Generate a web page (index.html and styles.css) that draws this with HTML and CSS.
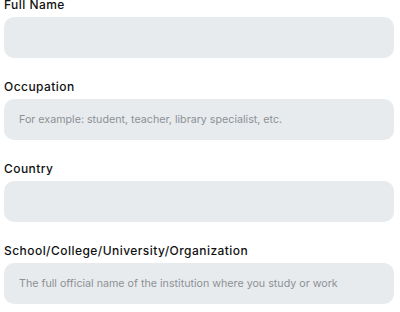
FILE: index.html
```html
<!DOCTYPE html>
<html>
<head>
<meta charset="utf-8">
<link rel="stylesheet" href="styles.css">
</head>
<body>
<form class="form">
  <div class="field">
    <label class="label">Full Name</label>
    <input class="input" type="text">
  </div>
  <div class="field">
    <label class="label">Occupation</label>
    <input class="input" type="text" placeholder="For example: student, teacher, library specialist, etc.">
  </div>
  <div class="field">
    <label class="label">Country</label>
    <input class="input" type="text">
  </div>
  <div class="field">
    <label class="label">School/College/University/Organization</label>
    <input class="input" type="text" placeholder="The full official name of the institution where you study or work">
  </div>
</form>
</body>
</html>
```
FILE: styles.css
```css
html, body {
  margin: 0;
  padding: 0;
  background: #ffffff;
}
.form {
  display: flex;
  flex-direction: column;
  gap: 22px;
  padding: 0 6px 0 4px;
  margin-top: -2px;
  font-family: Inter, "Noto Sans", sans-serif;
}
.field {
  display: flex;
  flex-direction: column;
  gap: 5px;
}
.label {
  font-size: 12px;
  line-height: 14px;
  font-weight: 500;
  color: #111111;
  letter-spacing: 0.45px;
}
.input {
  box-sizing: border-box;
  height: 41px;
  width: 100%;
  border: none;
  border-radius: 10px;
  background: #e8ebed;
  padding: 0 15px;
  font-family: Inter, "Noto Sans", sans-serif;
  font-size: 10.7px;
  color: #333;
  outline: none;
}
.input::placeholder {
  color: #8c9196;
}
```
